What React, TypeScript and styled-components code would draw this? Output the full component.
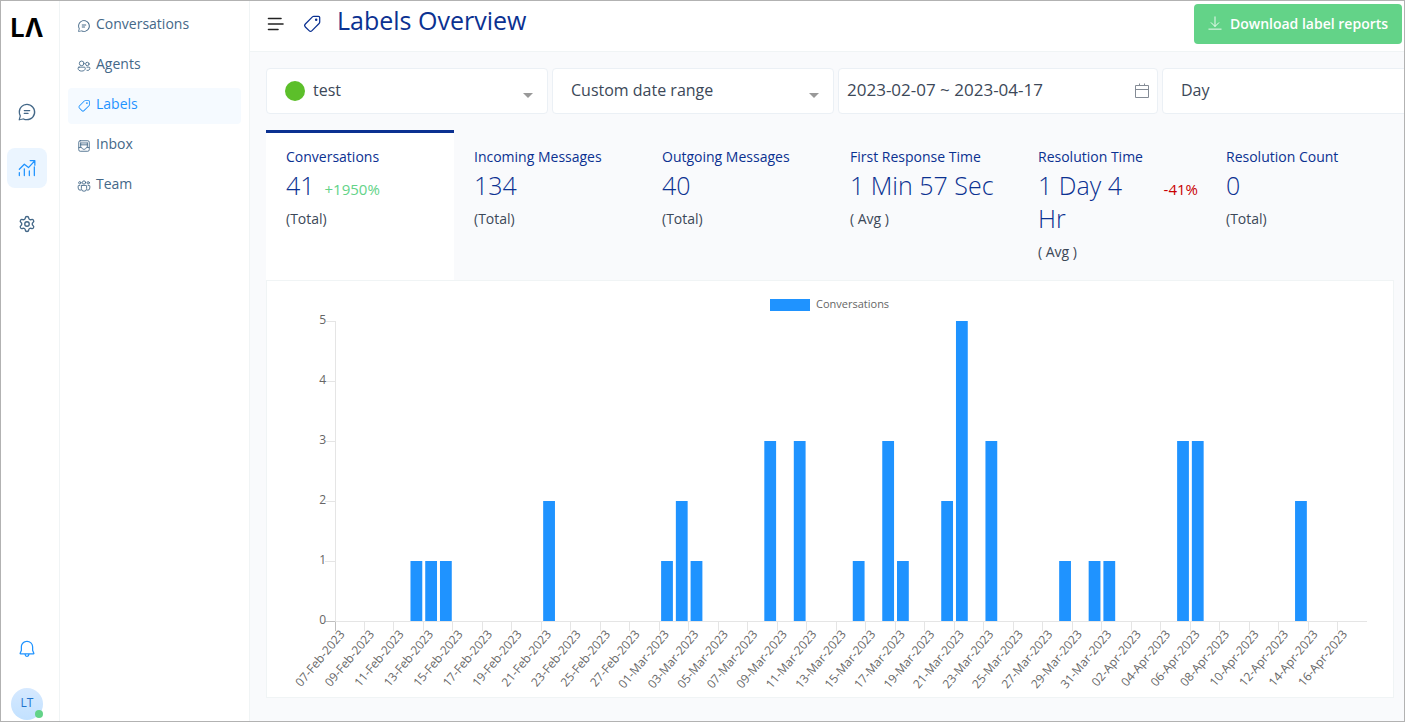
import React, { useLayoutEffect, useRef, useState } from 'react';
import styled, { createGlobalStyle } from 'styled-components';
import { Settings } from 'lucide-react';

const color = {
  frame: '#b2b2b2',
  line: '#f0f4f5',
  fieldLine: '#ebf0f5',
  slate: '#446888',
  text: '#3c4858',
  navy: '#0b3191',
  blue: '#1f93ff',
  green: '#63d388',
  red: '#c90000',
  canvas: '#f9fafc',
};

const GlobalStyle = createGlobalStyle`
  *, *::before, *::after { box-sizing: border-box; }
  body { margin: 0; font-family: 'Open Sans', 'Noto Sans', sans-serif; font-size: 14px; color: ${color.text}; }
  button, input, select { font-family: inherit; }
`;

const Page = styled.div`
  display: flex;
  min-height: 100vh;
  border: 1px solid ${color.frame};
  background: #fff;
`;

const Rail = styled.nav`
  display: flex;
  flex-direction: column;
  align-items: center;
  flex: none;
  width: 59px;
  padding: 11px 12px 1px 6px;
  border-right: 1px solid ${color.line};
`;

const Logo = styled.a`
  font-family: Inter, 'Open Sans', sans-serif;
  font-size: 25px;
  font-weight: 700;
  line-height: 32px;
  color: #000;
  text-decoration: none;
`;

const RailGroup = styled.div`
  display: flex;
  flex-direction: column;
  gap: 16px;
  margin: 48px 0 auto;
`;

const RailButton = styled.a<{ $active?: boolean }>`
  display: flex;
  align-items: center;
  justify-content: center;
  width: 40px;
  height: 40px;
  border-radius: 8px;
  color: ${(p) => (p.$active ? color.blue : color.slate)};
  background: ${(p) => (p.$active ? '#ebf5ff' : 'transparent')};
`;

const BellButton = styled.button`
  display: flex;
  align-items: center;
  justify-content: center;
  width: 40px;
  height: 40px;
  margin-bottom: 19px;
  padding: 0;
  border: 0;
  background: none;
  color: ${color.blue};
`;

const Avatar = styled.button`
  position: relative;
  width: 32px;
  height: 32px;
  padding: 0 0 4px;
  border: 0;
  border-radius: 50%;
  background: linear-gradient(#d6e9ff, #c2e1ff);
  color: #1f73cc;
  font-size: 12px;
`;

const Presence = styled.span`
  position: absolute;
  right: 0;
  bottom: 2px;
  width: 8px;
  height: 8px;
  border-radius: 50%;
  background: ${color.green};
`;

const Sidebar = styled.nav`
  flex: none;
  width: 190px;
  padding: 7px 8px;
  border-right: 1px solid ${color.line};
`;

const NavList = styled.ul`
  display: flex;
  flex-direction: column;
  gap: 4px;
  margin: 0;
  padding: 0;
  list-style: none;
`;

const NavLink = styled.a<{ $active?: boolean }>`
  display: flex;
  align-items: center;
  gap: 5px;
  height: 36px;
  padding: 0 9px;
  border-radius: 4px;
  line-height: 32px;
  text-decoration: none;
  color: ${(p) => (p.$active ? color.blue : color.slate)};
  background: ${(p) => (p.$active ? '#f5faff' : 'transparent')};

  span { height: 36px; }
`;

const Main = styled.main`
  flex: 1;
  min-width: 0;
  overflow: hidden;
  background: ${color.canvas};
`;

const Header = styled.header`
  display: flex;
  align-items: flex-start;
  height: 51px;
  padding: 3px 2px 0 17px;
  border-bottom: 1px solid ${color.line};
  background: #fff;
`;

const MenuButton = styled.button`
  display: flex;
  align-items: center;
  height: 40px;
  padding: 0;
  border: 0;
  background: none;
  color: #222;
`;

const TitleIcon = styled.span`
  display: flex;
  align-items: center;
  height: 40px;
  margin: 0 15px 0 17px;
  color: ${color.navy};
`;

const Title = styled.h1`
  margin: 0;
  font-size: 25px;
  font-weight: 400;
  line-height: 32px;
  color: ${color.navy};
`;

const DownloadButton = styled.button`
  display: flex;
  align-items: center;
  justify-content: center;
  gap: 8px;
  width: 208px;
  height: 40px;
  margin-left: auto;
  padding: 0 0 2px;
  border: 0;
  border-radius: 4px;
  background: ${color.green};
  color: #fff;
  font-size: 14px;
  font-weight: 600;
  white-space: nowrap;
`;

const Filters = styled.div`
  display: flex;
  gap: 4px;
  padding: 16px 0 16px 16px;
`;

const Field = styled.div<{ $width: number; $inset?: number }>`
  display: flex;
  align-items: center;
  flex: none;
  width: ${(p) => p.$width}px;
  height: 46px;
  padding: 0 7px 0 ${(p) => p.$inset ?? 18}px;
  border: 1px solid ${color.fieldLine};
  border-radius: 4px;
  background: #fff;
  color: #848b95;
`;

const Dot = styled.span`
  flex: none;
  width: 20px;
  height: 20px;
  margin-right: 8px;
  border-radius: 50%;
  background: #5cbf2a;
`;

const Select = styled.select`
  flex: 1;
  min-width: 0;
  height: 40px;
  padding: 0 0 3px;
  border: 0;
  appearance: none;
  background: none;
  color: ${color.text};
  font-size: 16px;
`;

const DateInput = styled.input`
  flex: 1;
  min-width: 0;
  height: 40px;
  padding: 0 0 3px;
  border: 0;
  background: none;
  color: ${color.text};
  font-size: 17px;
`;

const Caret = styled.span`
  flex: none;
  margin: 8px 7px 0 0;
  border: 5px solid transparent;
  border-top-color: #999;
  border-bottom: 0;
`;

const Report = styled.section`
  margin: 0 10px 16px 16px;
`;

const Metrics = styled.div`
  display: grid;
  grid-template-columns: repeat(6, 1fr);
`;

const Metric = styled.button<{ $active?: boolean }>`
  display: flex;
  flex-direction: column;
  align-items: flex-start;
  min-width: 0;
  min-height: 150px;
  padding: 14px 8px 18px 20px;
  border: 0;
  border-top: 3px solid ${(p) => (p.$active ? color.navy : 'transparent')};
  background: ${(p) => (p.$active ? '#fff' : 'transparent')};
  color: ${color.text};
  font-size: 14px;
  line-height: 20px;
  text-align: left;
`;

const MetricName = styled.span`
  color: ${color.navy};
  white-space: nowrap;
`;

const MetricRow = styled.span`
  display: flex;
  gap: 10px;
  margin: 2px 0 7px;
`;

const MetricValue = styled.span`
  font-size: 25px;
  font-weight: 300;
  line-height: 33px;
  color: ${color.navy};
`;

const Trend = styled.span<{ $up: boolean }>`
  height: 33px;
  font-size: 15px;
  line-height: 40px;
  color: ${(p) => (p.$up ? color.green : color.red)};
`;

const ChartCard = styled.div`
  height: 418px;
  border: 1px solid ${color.line};
  border-top-color: ${color.line};
  background: #fff;

  svg { display: block; }
  text { font-size: 12px; fill: #666; }
  .legend { font-size: 11px; }
`;

type IconProps = { size: number; children: React.ReactNode; filled?: boolean };

const Icon = ({ size, children, filled }: IconProps) => (
  <svg
    width={size}
    height={size}
    viewBox="0 0 24 24"
    fill={filled ? 'currentColor' : 'none'}
    stroke={filled ? 'none' : 'currentColor'}
    strokeWidth="1.5"
    strokeLinecap="round"
    strokeLinejoin="round"
    aria-hidden="true"
  >
    {children}
  </svg>
);

const ChatIcon = ({ size }: { size: number }) => (
  <Icon size={size} filled>
    <path d="M12 2c5.523 0 10 4.477 10 10s-4.477 10-10 10a9.96 9.96 0 0 1-4.644-1.142l-4.29 1.117a.85.85 0 0 1-1.037-1.036l1.116-4.289A9.959 9.959 0 0 1 2 12C2 6.477 6.477 2 12 2Zm0 1.5A8.5 8.5 0 0 0 3.5 12c0 1.47.373 2.883 1.073 4.137l.15.27-1.112 4.275 4.278-1.113.27.15A8.5 8.5 0 1 0 12 3.5ZM8.75 13h4.498a.75.75 0 0 1 .102 1.493l-.102.007H8.75a.75.75 0 0 1-.102-1.493L8.75 13Zm0-3.5h6.505a.75.75 0 0 1 .101 1.493l-.101.007H8.75a.75.75 0 0 1-.102-1.493L8.75 9.5Z" />
  </Icon>
);

const TagIcon = ({ size }: { size: number }) => (
  <Icon size={size} filled>
    <path d="M19.75 2A2.25 2.25 0 0 1 22 4.25v5.462a3.25 3.25 0 0 1-.952 2.298l-8.5 8.503a3.255 3.255 0 0 1-4.597.001L3.489 16.06a3.25 3.25 0 0 1-.003-4.596l8.5-8.51A3.25 3.25 0 0 1 14.284 2h5.465Zm0 1.5h-5.465c-.465 0-.91.185-1.239.513l-8.512 8.523a1.75 1.75 0 0 0 .015 2.462l4.461 4.454a1.755 1.755 0 0 0 2.477 0l8.5-8.503a1.75 1.75 0 0 0 .513-1.237V4.25a.75.75 0 0 0-.75-.75ZM17 5.502a1.5 1.5 0 1 1 0 3 1.5 1.5 0 0 1 0-3Z" />
  </Icon>
);

const BellIcon = () => (
  <Icon size={20} filled>
    <path d="M12 1.996a7.49 7.49 0 0 1 7.496 7.25l.004.25v4.097l1.38 3.156a1.249 1.249 0 0 1-1.145 1.75L15 18.502a3 3 0 0 1-5.995.177L9 18.499H4.275a1.251 1.251 0 0 1-1.147-1.747L4.5 13.594V9.496c0-4.155 3.352-7.5 7.5-7.5ZM13.5 18.5l-3 .002a1.5 1.5 0 0 0 2.993.145l.006-.147ZM12 3.496c-3.32 0-6 2.674-6 6v4.41L4.656 17h14.697L18 13.907V9.509l-.003-.225A5.988 5.988 0 0 0 12 3.496Z" />
  </Icon>
);

const TrendIcon = () => (
  <Icon size={20}>
    <path d="M2.8 21v-3.5M8.8 21v-8M14.8 21v-5.5M20.8 21V10.5M2.8 13.500l6-6 5 4 7.400-8M15.800 3h5.600v5.600" />
  </Icon>
);

const AgentsIcon = () => (
  <Icon size={14}>
    <circle cx="8" cy="7.5" r="4" />
    <circle cx="17.7" cy="8.5" r="3" />
    <path d="M3.5 14h9a1.700 1.700 0 0 1 1.700 1.700c0 3-2.200 5-6.200 5s-6.200-2-6.200-5A1.700 1.700 0 0 1 3.500 14ZM17 14h3.400a1.800 1.800 0 0 1 1.800 1.800c0 2.800-2.200 4.300-5.200 3.700" />
  </Icon>
);

const InboxIcon = () => (
  <Icon size={14}>
    <rect x="3" y="3" width="18" height="18" rx="2.5" />
    <path d="M3.500 14.500H8c.4 2 1.900 3.200 4 3.200s3.600-1.200 4-3.200h4.500M6 6.800h12M6 10h12M6.300 13V7M17.700 13V7" />
  </Icon>
);

const TeamIcon = () => (
  <Icon size={14}>
    <circle cx="12" cy="6" r="2.8" />
    <circle cx="4.8" cy="6.5" r="2" />
    <circle cx="19.2" cy="6.5" r="2" />
    <path d="M8.500 11h7a1 1 0 0 1 1 1v4.500a4.500 4.500 0 0 1-9 0V12a1 1 0 0 1 1-1ZM5 11H3a1 1 0 0 0-1 1v3.500a3.800 3.800 0 0 0 4.500 3.700M19 11h2a1 1 0 0 1 1 1v3.500a3.800 3.800 0 0 1-4.500 3.700" />
  </Icon>
);

const MenuIcon = () => (
  <svg width="18" height="16" viewBox="0 0 18 16" fill="none" stroke="currentColor" strokeWidth="1.6" strokeLinecap="round" aria-hidden="true">
    <path d="M1.500 2.500h12.500M1.500 8h14.500M1.500 13.500h9.500" />
  </svg>
);

const CalendarIcon = () => (
  <svg width="16" height="18" viewBox="0 0 16 18" fill="none" stroke="currentColor" aria-hidden="true">
    <path d="M1.500 3.500h13v12h-13ZM1.500 7.500h13M5.500 1.500v2M10.500 1.500v2" />
  </svg>
);

const DownloadIcon = () => (
  <Icon size={14}>
    <path d="M12 1.500v16M5.500 11.500l6.500 6.500 6.500-6.500M1.500 22.500h21" />
  </Icon>
);

const navItems = [
  { label: 'Conversations', icon: <ChatIcon size={14} /> },
  { label: 'Agents', icon: <AgentsIcon /> },
  { label: 'Labels', icon: <TagIcon size={14} />, active: true },
  { label: 'Inbox', icon: <InboxIcon /> },
  { label: 'Team', icon: <TeamIcon /> },
];

const metrics = [
  { name: 'Conversations', value: '41', trend: '+1950%', note: '(Total)' },
  { name: 'Incoming Messages', value: '134', note: '(Total)' },
  { name: 'Outgoing Messages', value: '40', note: '(Total)' },
  { name: 'First Response Time', value: '1 Min 57 Sec', note: '( Avg )' },
  { name: 'Resolution Time', value: '1 Day 4 Hr', trend: '-41%', note: '( Avg )' },
  { name: 'Resolution Count', value: '0', note: '(Total)' },
];

const DAYS = 70;

/* Conversation counts, keyed by days since 7 February 2023 */
const counts: Record<number, number> = {
  5: 1, 6: 1, 7: 1, 14: 2, 22: 1, 23: 2, 24: 1, 29: 3, 31: 3, 35: 1, 37: 3,
  38: 1, 41: 2, 42: 5, 44: 3, 49: 1, 51: 1, 52: 1, 57: 3, 58: 3, 65: 2,
};

const MONTHS = ['Jan', 'Feb', 'Mar', 'Apr'];

const dayLabel = (day: number) => {
  const date = new Date(Date.UTC(2023, 1, 7 + day));
  return `${String(date.getUTCDate()).padStart(2, '0')}-${MONTHS[date.getUTCMonth()]}-2023`;
};

const Chart = () => {
  const card = useRef<HTMLDivElement>(null);
  const [width, setWidth] = useState(1126);

  useLayoutEffect(() => {
    const el = card.current;
    if (!el) return;
    const measure = () => setWidth(el.clientWidth);
    measure();
    const observer = new ResizeObserver(measure);
    observer.observe(el);
    return () => observer.disconnect();
  }, []);

  const left = 68;
  const right = width - 26;
  const base = 340;
  const unit = 60;
  const step = (right - left) / DAYS;
  const ticks = Array.from({ length: DAYS / 2 }, (_, i) => i * 2);
  const crisp = (v: number) => Math.floor(v) + 0.5;

  return (
    <ChartCard ref={card}>
      <svg width={width} height="416" role="img" aria-label="Conversations per day">
        <rect x={width / 2 - 60} y="18" width="40" height="12" fill={color.blue} />
        <text className="legend" x={width / 2 - 14} y="27">Conversations</text>
        {[0, 1, 2, 3, 4, 5].map((n) => (
          <g key={n}>
            <line x1={left - 10} x2={left} y1={base - n * unit + 0.5} y2={base - n * unit + 0.5} stroke={n ? '#e5e5e5' : '#bfbfbf'} />
            <text x={left - 9} y={base - n * unit + 3} textAnchor="end">{n}</text>
          </g>
        ))}
        {ticks.map((day) => {
          const x = left + day * step;
          return (
            <g key={day}>
              <line x1={crisp(x)} x2={crisp(x)} y1={base} y2={base + 10} stroke={day ? '#e5e5e5' : '#bfbfbf'} />
              <text transform={`translate(${x + step / 2} ${base + 11}) rotate(-50)`} textAnchor="end" y="4">
                {dayLabel(day)}
              </text>
            </g>
          );
        })}
        <path d={`M${left + 0.5} 40V${base + 0.5}H${right}`} fill="none" stroke="#e5e5e5" />
        {Object.entries(counts).map(([day, n]) => (
          <rect key={day} x={left + Number(day) * step + step * 0.12} y={base - n * unit} width={step * 0.8} height={n * unit} fill={color.blue} />
        ))}
      </svg>
    </ChartCard>
  );
};

export default function App() {
  return (
    <>
      <GlobalStyle />
      <Page>
        <Rail aria-label="Primary">
          <Logo href="#home">LΛ</Logo>
          <RailGroup>
            <RailButton href="#conversations" aria-label="Conversations"><ChatIcon size={20} /></RailButton>
            <RailButton href="#reports" aria-label="Reports" $active><TrendIcon /></RailButton>
            <RailButton href="#settings" aria-label="Settings"><Settings size={18} strokeWidth={1.8} /></RailButton>
          </RailGroup>
          <BellButton aria-label="Notifications"><BellIcon /></BellButton>
          <Avatar>LT<Presence /></Avatar>
        </Rail>
        <Sidebar aria-label="Reports">
          <NavList>
            {navItems.map((item) => (
              <li key={item.label}>
                <NavLink href={`#${item.label.toLowerCase()}`} $active={item.active}>
                  {item.icon}
                  <span>{item.label}</span>
                </NavLink>
              </li>
            ))}
          </NavList>
        </Sidebar>
        <Main>
          <Header>
            <MenuButton aria-label="Toggle menu"><MenuIcon /></MenuButton>
            <TitleIcon><TagIcon size={20} /></TitleIcon>
            <Title>Labels Overview</Title>
            <DownloadButton><DownloadIcon />Download label reports</DownloadButton>
          </Header>
          <Filters>
            <Field $width={282}>
              <Dot />
              <Select aria-label="Label"><option>test</option></Select>
              <Caret />
            </Field>
            <Field $width={282}>
              <Select aria-label="Date range"><option>Custom date range</option></Select>
              <Caret />
            </Field>
            <Field $width={320} $inset={8}>
              <DateInput aria-label="Dates" defaultValue="2023-02-07 ~ 2023-04-17" />
              <CalendarIcon />
            </Field>
            <Field $width={282}>
              <Select aria-label="Group by"><option>Day</option></Select>
              <Caret />
            </Field>
          </Filters>
          <Report>
            <Metrics>
              {metrics.map((m, i) => (
                <Metric key={m.name} $active={i === 0}>
                  <MetricName>{m.name}</MetricName>
                  <MetricRow>
                    <MetricValue>{m.value}</MetricValue>
                    {m.trend && <Trend $up={m.trend.startsWith('+')}>{m.trend}</Trend>}
                  </MetricRow>
                  <span>{m.note}</span>
                </Metric>
              ))}
            </Metrics>
            <Chart />
          </Report>
        </Main>
      </Page>
    </>
  );
}
